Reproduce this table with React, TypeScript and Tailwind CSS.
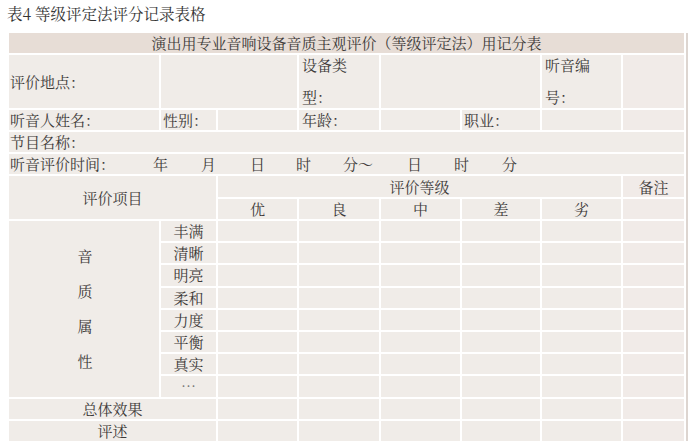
import React from "react";

const font = {
  fontFamily: '"Noto Serif CJK SC", "Noto Sans CJK SC", serif',
};

function C({
  className = "",
  children,
}: {
  className?: string;
  children?: React.ReactNode;
}) {
  return (
    <div className={`bg-[#f0ece8] text-[15px] leading-[20px] text-[#3d3a38] ${className}`}>
      {children}
    </div>
  );
}

export default function App() {
  const items = ["丰满", "清晰", "明亮", "柔和", "力度", "平衡", "真实", "…"];
  return (
    <div className="w-[692px] h-[447px] bg-white overflow-hidden" style={font}>
      <div className="pl-[7px] pt-[3px] h-[33px] text-[15.5px] leading-[21px] text-[#333]">
        表4 等级评定法评分记录表格
      </div>
      <div className="ml-[9px] w-[679px] bg-white border-r-2 border-[#ddd5d0]">
        <div className="grid grid-cols-[150px_55px_79px_80px_79px_78px_79px_61px] grid-rows-[20px_53px_20px_20px_20px_21px_20px_repeat(10,20.2px)] gap-[2px]">
          {/* header */}
          <div className="col-span-8 bg-[#e7ddd6] text-[15px] leading-[20px] text-[#3d3a38] text-center">
            演出用专业音响设备音质主观评价（等级评定法）用记分表
          </div>
          {/* row 2 */}
          <C className="flex items-center pl-[1px]">评价地点：</C>
          <C className="col-span-2" />
          <C className="flex flex-col justify-between pl-[3px] pb-[1px]">
            <span>设备类</span>
            <span>型：</span>
          </C>
          <C className="col-span-2" />
          <C className="flex flex-col justify-between pl-[3px] pb-[1px]">
            <span>听音编</span>
            <span>号：</span>
          </C>
          <C className="bg-[#f1ebe8]" />
          {/* row 3 */}
          <C className="pl-[1px]">听音人姓名：</C>
          <C className="pl-[2px]">性别：</C>
          <C />
          <C className="pl-[3px]">年龄：</C>
          <C />
          <C className="pl-[2px]">职业：</C>
          <C />
          <C className="bg-[#f1ebe8]" />
          {/* row 4 */}
          <C className="col-span-8 pl-[1px]">节目名称：</C>
          {/* row 5 */}
          <C className="col-span-8 pl-[1px] flex whitespace-nowrap">
            <span className="w-[143px]">听音评价时间：</span>
            <span className="w-[48px]">年</span>
            <span className="w-[49px]">月</span>
            <span className="w-[46px]">日</span>
            <span className="w-[47px]">时</span>
            <span className="w-[64px]">分～</span>
            <span className="w-[47px]">日</span>
            <span className="w-[48px]">时</span>
            <span>分</span>
          </C>
          {/* row 6-7 */}
          <C className="col-span-2 row-span-2 flex items-center justify-center">评价项目</C>
          <C className="col-span-5 text-center leading-[21px]">评价等级</C>
          <C className="bg-[#f1ebe8] text-center leading-[21px]">备注</C>
          <C className="text-center">优</C>
          <C className="text-center">良</C>
          <C className="text-center">中</C>
          <C className="text-center">差</C>
          <C className="text-center">劣</C>
          <C className="bg-[#f1ebe8]" />
          {/* quality rows */}
          {items.map((it, i) => (
            <React.Fragment key={it}>
              {i === 0 && (
                <C className="row-span-8 flex flex-col items-center justify-center gap-[15px] pl-[2px]">
                  <span>音</span>
                  <span>质</span>
                  <span>属</span>
                  <span>性</span>
                </C>
              )}
              <C className={`text-center ${it === "…" ? "text-[12px] text-[#777]" : ""}`}>{it}</C>
              <C />
              <C />
              <C />
              <C />
              <C />
              <C className="bg-[#f1ebe8]" />
            </React.Fragment>
          ))}
          <C className="col-span-2 text-center">总体效果</C>
          <C />
          <C />
          <C />
          <C />
          <C />
          <C className="bg-[#f1ebe8]" />
          <C className="col-span-2 text-center">评述</C>
          <C />
          <C />
          <C />
          <C />
          <C />
          <C className="bg-[#f1ebe8]" />
        </div>
      </div>
    </div>
  );
}
